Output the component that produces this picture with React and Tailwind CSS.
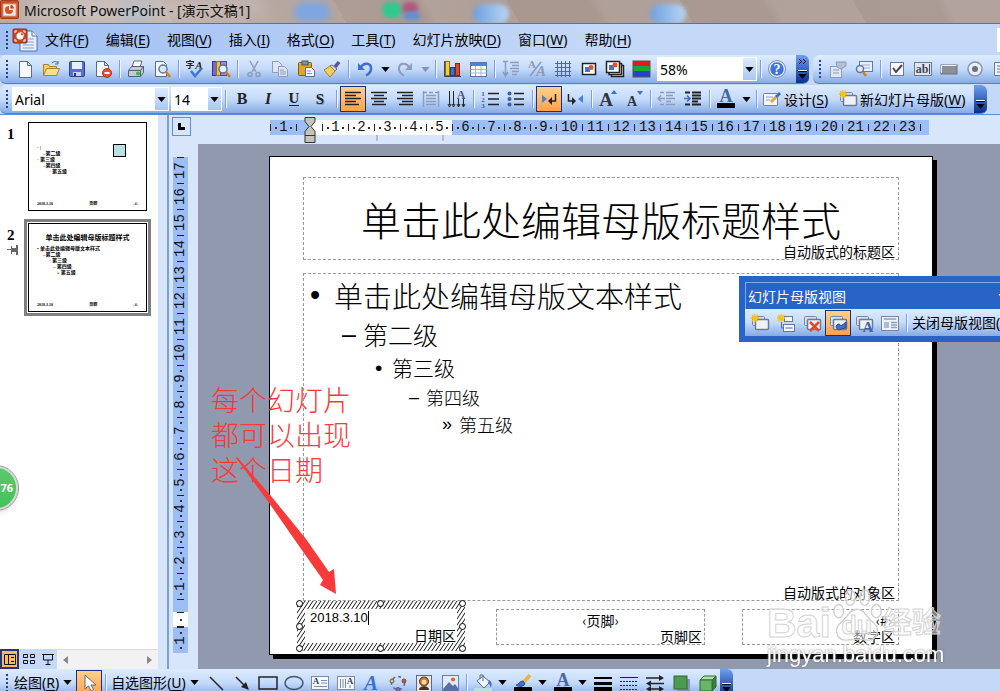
import clsx from 'clsx';

const MENUS = [
  ['文件', 'F'],
  ['编辑', 'E'],
  ['视图', 'V'],
  ['插入', 'I'],
  ['格式', 'O'],
  ['工具', 'T'],
  ['幻灯片放映', 'D'],
  ['窗口', 'W'],
  ['帮助', 'H'],
];

// '|' is a separator, a trailing '*' marks a pressed button, 'v' is a drop-down caret.
const STANDARD = ['new', 'open', 'save', 'permission', '|', 'print', 'preview', '|', 'spelling', 'research', '|', 'cut', 'copy', 'paste', 'painter', '|', 'undo', 'v', 'redo', 'v-off', '|', 'chart', 'table', '|', 'expand', 'showformat', 'grid', 'slide', 'slides', 'colors'];
const CONTROLS = ['properties', 'code', '|', 'checkbox', 'textbox', 'button', 'radio', 'listbox'];
const FORMAT = ['bold', 'italic', 'underline', 'shadowtext', '|', 'left*', 'center', 'right', 'distribute', 'direction', '|', 'numbers', 'bullets', '|', 'ltr*', 'rtl', '|', 'grow', 'shrink', '|', 'outdent', 'indent', '|', 'fontcolor', 'v', '|'];
const DRAWING = ['line', 'arrow', 'rect', 'oval', 'hbox', 'vbox', 'wordart', 'diagram', 'clipart', 'picture', '|', 'fill', 'v', 'brush', 'v', 'fontcolor', 'v', 'weight', 'dash', 'arrows', 'shadow', 'cube'];
const MASTER = ['newmaster', 'newtitle', 'delmaster', 'preserve*', 'rename', 'layout', '|'];

const TITLES = {
  new: '新建', open: '打开', save: '保存', permission: '权限', print: '打印', preview: '打印预览', spelling: '拼写检查', research: '信息检索',
  cut: '剪切', copy: '复制', paste: '粘贴', painter: '格式刷', undo: '撤消', redo: '恢复', chart: '插入图表', table: '插入表格',
  expand: '全部展开', showformat: '显示格式', grid: '网格', slide: '幻灯片', slides: '幻灯片组', colors: '颜色', properties: '属性', code: '查看代码',
  checkbox: '复选框', textbox: '文字框', button: '命令按钮', radio: '选项按钮', listbox: '列表框', bold: '加粗', italic: '倾斜', underline: '下划线',
  shadowtext: '阴影', left: '左对齐', center: '居中', right: '右对齐', distribute: '分散对齐', direction: '更改文字方向', numbers: '编号', bullets: '项目符号',
  ltr: '从左向右', rtl: '从右向左', grow: '增大字号', shrink: '减小字号', outdent: '减少缩进', indent: '增加缩进', fontcolor: '字体颜色',
  line: '直线', arrow: '箭头', rect: '矩形', oval: '椭圆', hbox: '文本框', vbox: '竖排文本框', wordart: '艺术字', diagram: '图示', clipart: '剪贴画',
  picture: '图片', fill: '填充颜色', brush: '线条颜色', weight: '线型', dash: '虚线线型', arrows: '箭头样式', shadow: '阴影样式', cube: '三维效果样式',
  newmaster: '插入新幻灯片母版', newtitle: '插入新标题母版', delmaster: '删除母版', preserve: '保护母版', rename: '重命名母版', layout: '母版版式',
  help: '帮助', pointer: '选择对象', design: '设计',
};

const LEVELS = [
  { text: '单击此处编辑母版文本样式', bullet: '•', row: 'h-11 pl-1.5 text-[29px]', mark: 'w-6' },
  { text: '第二级', bullet: '–', row: 'h-[34px] pl-[38px] text-[25px]', mark: 'w-[21px]' },
  { text: '第三级', bullet: '•', row: 'h-8 pl-[71px] text-[21px]', mark: 'w-[17px]' },
  { text: '第四级', bullet: '–', row: 'h-[26px] pl-[105px] text-[18px]', mark: 'w-[17px]' },
  { text: '第五级', bullet: '»', row: 'h-7 pl-[138px] text-[18px]', mark: 'w-[17px]' },
];

const UI = "font-['Noto_Sans','Noto_Sans_CJK_SC',sans-serif]";
const BAR = 'bg-linear-to-b from-[#dcebff] via-[#c5dbfb] to-[#86abe4]';

export default function App() {
  return (
    <div className={clsx('flex h-screen flex-col overflow-hidden bg-[#c4d8f8] text-black', UI)}>
      <TitleBar />
      <MenuBar />
      <div className="flex h-[29px] shrink-0">
        <Strip>
          <Grip />
          <Tools items={STANDARD} />
          <Picker label="显示比例" value="58%" width="w-[100px] ml-[3px]" />
          <Separator />
          <Tool name="help" />
          <Overflow more />
        </Strip>
        <Strip grow>
          <Grip />
          <Tools items={CONTROLS} />
        </Strip>
      </div>
      <div className="mt-px flex h-[29px] shrink-0">
        <Strip>
          <Grip />
          <Picker label="字体" value="Arial" width="w-[157px]" />
          <Picker label="字号" value="14" width="w-[51px] ml-0.5" />
          <Separator />
          <Tools items={FORMAT} />
          <TextTool icon="design" label="设计" accel="S" />
          <TextTool icon="newmaster" label="新幻灯片母版" accel="W" />
          <Overflow />
        </Strip>
      </div>
      <main className="relative flex min-h-0 flex-1 border-t border-[#5a8ad8]">
        <SlidePane />
        <Editor />
        <FloatingToolbar />
        <Annotation />
        <Watermark />
        <span className="absolute top-[351px] -left-7 flex h-11 w-[46px] items-center justify-end rounded-full border-2 border-[#d8d8d8] bg-linear-to-b from-[#5cc96c] to-[#3fc25c] pr-[3px] text-[11px] font-bold text-white shadow-md outline outline-[#999]">
          76
        </span>
      </main>
      <DrawingBar />
    </div>
  );
}

function TitleBar() {
  return (
    <header className="relative flex h-6 shrink-0 items-start gap-[5px] overflow-hidden border-b border-[#6c7078] bg-linear-to-r from-[#b9aaa4] via-[#a8978f] to-[#ab9b96]">
      <div className="absolute inset-0 bg-[repeating-linear-gradient(60deg,transparent_0_70px,rgba(255,255,255,0.08)_80px_150px)]" />
      <span className="absolute top-0.5 left-[118px] h-5 w-9 rounded-full bg-[#8fb0c8]/50 blur-xs" />
      <span className="absolute top-0.5 left-[294px] h-5 w-9 rounded-full bg-[#7ea6e0] blur-[3px]" />
      <span className="absolute top-0.5 left-[382px] h-4 w-5 rounded-full bg-[#2fc98e] blur-[2px]" />
      <span className="absolute top-0.5 left-[402px] h-3 w-4 rounded-full bg-[#b0567c] blur-[2px]" />
      <span className="absolute top-3 left-[404px] h-2 w-4 rounded-full bg-[#5c8fd8] blur-[2px]" />
      <span className="absolute top-1 left-[473px] h-5 w-9 rounded-full bg-linear-to-r from-[#6f9fe0] to-[#b8d6f2] blur-[2px]" />
      <span className="absolute top-1 left-[650px] h-5 w-9 rounded-full bg-linear-to-r from-[#6f9fe0] to-[#b8d6f2] blur-[2px]" />
      <span className="absolute top-0 left-6 h-5 w-[236px] rounded-full bg-white/40 blur-md" />
      <svg viewBox="0 0 19 19" className="relative h-[19px] w-[19px] shrink-0">
        <rect x="0.5" y="0.5" width="18" height="18" rx="1" fill="#c8502e" stroke="#a43a1c" />
        <rect x="3" y="4" width="13" height="12" fill="#fbe9df" stroke="#e39a78" />
        <circle cx="9" cy="10" r="4" fill="#d0562f" />
        <path d="M9 10V6a4 4 0 0 1 4 4z" fill="#fbe9df" />
        <path d="M10.500 8.500V5a4 4 0 0 1 3.500 3.500z" fill="#b8421f" />
      </svg>
      <h1 className="relative text-[14px] leading-[21px] text-[#111]">Microsoft PowerPoint - [演示文稿1]</h1>
    </header>
  );
}

function MenuBar() {
  return (
    <nav className="flex h-[31px] shrink-0 items-center bg-linear-to-r from-[#a0bff4] to-[#c4d8f8] to-60%">
      <Grip />
      <svg viewBox="0 0 26 26" className="h-[26px] w-[26px] shrink-0">
        <path d="M8 4h12l5 5v15H8z" fill="#e8f1fd" stroke="#54709e" />
        <path d="M20 4v5h5" fill="#fff" stroke="#54709e" />
        <path d="M16 12h6M14 15h8M11 18h11M11 21h11" stroke="#7fa3dc" />
        <rect x="1" y="2" width="14" height="14" rx="1" fill="#c64a28" stroke="#8e2c12" />
        <path d="M3 6V4h2M11 4h2v2M13 12v2h-2M5 14H3v-2" stroke="#fff" fill="none" />
        <circle cx="8" cy="9" r="3.500" fill="#fff" />
        <path d="M8.500 8.500V5a4 4 0 0 1 3.500 3.500z" fill="#d8663f" stroke="#fff" strokeWidth="0.500" />
      </svg>
      <ul className="flex pl-[7px]">
        {MENUS.map(([label, accel]) => (
          <li key={accel} className="pr-[17px] pb-0.5">
            <button type="button" className="text-[14px] leading-5 whitespace-nowrap">
              <Accel label={label} accel={accel} />
            </button>
          </li>
        ))}
      </ul>
      <div className="ml-auto h-6 w-[3px] bg-white" />
    </nav>
  );
}

function Accel({ label, accel }) {
  return (
    <>
      {label}(<u className="underline-offset-2">{accel}</u>)
    </>
  );
}

function Strip({ grow, children }) {
  return <div className={clsx('flex h-full shrink-0 items-center overflow-hidden rounded-md border-b border-[#5681c9]', BAR, grow && 'ml-1 min-w-0 flex-1 !shrink rounded-r-none')}>{children}</div>;
}

function Grip() {
  return (
    <div className="ml-1.5 flex w-1.5 shrink-0 flex-col gap-0.5">
      {[0, 1, 2, 3, 4].map((n) => (
        <span key={n} className="h-0.5 w-0.5 bg-[#27417f]" />
      ))}
    </div>
  );
}

function Separator() {
  return <div className="mx-[3px] h-[18px] w-px shrink-0 bg-[#7f9fd6] shadow-[1px_0_0_#f0f6ff]" />;
}

function Caret({ off }) {
  return (
    <svg viewBox="0 0 10 6" className="h-[5px] w-[9px] shrink-0">
      <path d="M0 0h10L5 6z" fill={off ? '#8a94a8' : '#000'} />
    </svg>
  );
}

function Tool({ name, pressed, small }) {
  return (
    <button
      type="button"
      aria-label={TITLES[name]}
      className={clsx('flex w-[26px] shrink-0 items-center justify-center', small ? 'h-[25px]' : 'h-[26px]', pressed && 'border border-[#1c2f7c] bg-linear-to-b from-[#ffd08a] to-[#ffa24e]')}
    >
      <Icon name={name} />
    </button>
  );
}

function Tools({ items }) {
  return items.map((item, i) => {
    if (item === '|') return <Separator key={i} />;
    if (item[0] === 'v' && item !== 'vbox') {
      return (
        <button key={i} type="button" aria-label="更多" className="flex h-6 w-3.5 shrink-0 items-center justify-center">
          <Caret off={item === 'v-off'} />
        </button>
      );
    }
    return <Tool key={i} name={item.replace('*', '')} pressed={item.endsWith('*')} />;
  });
}

function Picker({ label, value, width }) {
  return (
    <label className={clsx('relative flex h-6 shrink-0 items-center bg-white', width)}>
      <select aria-label={label} defaultValue={value} className="h-full w-full appearance-none bg-white pl-[3px] text-[14px] outline-none">
        <option>{value}</option>
      </select>
      <span className="pointer-events-none absolute inset-y-0 right-0 flex w-[15px] items-center justify-center border border-white bg-linear-to-b from-[#dcebff] to-[#a9c6f3]">
        <Caret />
      </span>
    </label>
  );
}

function TextTool({ icon, label, accel }) {
  return (
    <button type="button" className="flex h-[26px] shrink-0 items-center gap-0.5 pr-2 pl-0.5 text-[14px] whitespace-nowrap">
      <Icon name={icon} />
      <span>
        <Accel label={label} accel={accel} />
      </span>
    </button>
  );
}

function Overflow({ more }) {
  return (
    <button type="button" aria-label="工具栏选项" className={clsx('flex h-full w-[13px] shrink-0 flex-col items-center justify-end bg-linear-to-b from-[#6f9ff0] to-[#0b2f8c] pb-1', more && 'ml-1.5')}>
      {more ? (
        <svg viewBox="0 0 9 5" className="mt-1 mb-auto h-[5px] w-[9px] shrink-0" fill="none" stroke="#000">
          <path d="m1 0 2.500 2.500L1 5M5 0l2.500 2.500L5 5" />
        </svg>
      ) : null}
      <span className="mb-0.5 h-0.5 w-[9px] shrink-0 border-t border-white bg-black" />
      <Caret />
    </button>
  );
}

function SlidePane() {
  return (
    <aside className="flex w-[169px] shrink-0 border-r-2 border-[#7ba0de] bg-[#d6e5fb]">
      <div className="flex min-w-0 flex-1 flex-col bg-white">
        <ol className="flex flex-1 flex-col pr-[11px] font-['Liberation_Serif','Noto_Sans_CJK_SC',serif]">
          <li className="flex pt-[7px]">
            <span className="w-7 pt-0.5 pl-[7px] text-[15px] leading-5 font-bold">1</span>
            <Thumb>
              <span className="absolute top-[21px] right-5 h-[13px] w-[13px] border border-black bg-[#b9e1e3]" />
              <ThumbLines className="top-[22px]" lines={['· |', '–第二级', '· 第三级', '–第四级', '· 第五级']} indents={['pl-0', 'pl-1.5', 'pl-0', 'pl-1.5', 'pl-3']} />
            </Thumb>
          </li>
          <li className="flex pt-2">
            <div className="flex w-6 flex-col pt-1.5 pl-[7px]">
              <span className="text-[15px] leading-5 font-bold">2</span>
              <svg viewBox="0 0 12 10" className="h-2.5 w-3" fill="#666" aria-hidden="true">
                <path d="M0 4h4V1h1v2h4V0h2v10H9V7H5v2H4V5H0z" />
              </svg>
            </div>
            <div className="-mr-1 flex flex-1 border-3 border-[#808080] p-px">
              <Thumb>
                <p className="pt-2 text-center text-[7px] leading-3 font-bold whitespace-nowrap">单击此处编辑母版标题样式</p>
                <ThumbLines className="top-[22px]" lines={['• 单击此处编辑母版文本样式', '–第二级', '· 第三级', '– 第四级', '» 第五级']} indents={['pl-0', 'pl-1.5', 'pl-3', 'pl-4', 'pl-5']} />
              </Thumb>
            </div>
          </li>
        </ol>
        <div className="flex h-5 items-stretch">
          <ViewButton label="普通视图" pressed>
            <path d="M1.500 2.500h11v10h-11zM5.500 2.500v10M8 5.500h3M8 9.500h3" />
          </ViewButton>
          <ViewButton label="幻灯片浏览视图">
            <path d="M1.500 2.500h4v3h-4zM8.500 2.500h4v3h-4zM1.500 8.500h4v3h-4zM8.500 8.500h4v3h-4z" />
          </ViewButton>
          <ViewButton label="幻灯片放映">
            <path d="M1 2.500h12M2.500 3v5h9V3M7 8v4M4.500 12.500h5" />
          </ViewButton>
          <div className="flex flex-1 items-center justify-between border-t border-[#ddd] bg-[#f2f2f2] px-1.5 text-[#888]">
            <svg viewBox="0 0 5 8" className="h-2 w-[5px]" fill="currentColor">
              <path d="M5 0v8L0 4z" />
            </svg>
            <svg viewBox="0 0 5 8" className="h-2 w-[5px]" fill="currentColor">
              <path d="M0 0v8l5-4z" />
            </svg>
          </div>
        </div>
      </div>
      <div className="w-[9px] bg-[#d6e5fb]" />
    </aside>
  );
}

function Thumb({ children }) {
  return (
    <div className="relative h-[89px] flex-1 overflow-hidden border border-black bg-white">
      {children}
      <div className="absolute inset-x-2 bottom-1 flex items-end justify-between text-[4px] leading-1 font-bold">
        <span>2018.3.10</span>
        <span>页脚</span>
        <span>‹#›</span>
      </div>
    </div>
  );
}

function ThumbLines({ className, lines, indents }) {
  return (
    <ul className={clsx('absolute left-2', className)}>
      {lines.map((line, i) => (
        <li key={line} className={clsx('text-[5px] leading-[6px] font-bold whitespace-nowrap', indents[i])}>
          {line}
        </li>
      ))}
    </ul>
  );
}

function ViewButton({ label, pressed, children }) {
  return (
    <button type="button" aria-label={label} className={clsx('flex w-[19px] items-center justify-center', pressed ? 'border-2 border-[#26357c] bg-[#ffb868]' : 'bg-[#c4daf8]')}>
      <svg viewBox="0 0 14 14" className="h-3.5 w-3.5 shrink-0" fill="none" stroke="#111">
        {children}
      </svg>
    </button>
  );
}

// Ruler cells are one centimetre each, centred on their number.
function HCell({ n }) {
  return (
    <span className="flex w-[26px] shrink-0 items-center">
      <span className="h-[7px] w-px bg-[#222]" />
      {n < 10 ? <span className="ml-1 h-0.5 w-0.5 bg-[#333]" /> : null}
      <span className="flex-1 text-center">{n}</span>
      {n < 10 ? <span className="mr-1 h-0.5 w-0.5 bg-[#333]" /> : null}
    </span>
  );
}

function VCell({ n }) {
  return (
    <span className="flex h-[26px] shrink-0 flex-col items-center">
      <span className="h-px w-[7px] shrink-0 bg-[#222]" />
      {n < 10 ? <span className="mt-1 h-0.5 w-0.5 shrink-0 bg-[#333]" /> : null}
      <span className="flex min-h-0 flex-1 items-center justify-center">
        <span className="-rotate-90">{n}</span>
      </span>
      {n < 10 ? <span className="mb-1 h-0.5 w-0.5 shrink-0 bg-[#333]" /> : null}
    </span>
  );
}

const range = (from, to) => Array.from({ length: to - from + 1 }, (_, i) => from + i);
const RULER = "font-['Liberation_Mono',monospace] text-[14px] leading-[15px] text-[#111]";

function Editor() {
  return (
    <section className="flex min-w-0 flex-1 flex-col bg-[#d8e6fb]">
      <div className="flex h-[29px] shrink-0 items-start">
        <button type="button" aria-label="制表符" className="mt-0.5 ml-[3px] flex h-[19px] w-[19px] shrink-0 items-center justify-center border border-[#5f8fdc]">
          <span className="h-[7px] w-[7px] border-b-3 border-l-3 border-black" />
        </button>
        <div className={clsx('relative mt-[5px] ml-[79px] flex h-[15px]', RULER)}>
          <div className="flex w-[39px] overflow-hidden bg-[#9dbdf6]">
            <HCell n={1} />
            <span className="h-[7px] w-px self-center bg-[#222]" />
          </div>
          <div className="flex bg-white pl-[13px]">
            {range(1, 5).map((n) => (
              <HCell key={n} n={n} />
            ))}
          </div>
          <div className="flex items-center bg-[#9dbdf6] pr-2">
            {range(6, 23).map((n) => (
              <HCell key={n} n={n} />
            ))}
            <span className="h-[7px] w-px bg-[#222]" />
          </div>
          <svg viewBox="0 0 12 28" className="absolute -top-[4px] left-[34px] h-7 w-3" fill="#c4c4bc" stroke="#333">
            <path d="M1 1.500h10v4l-4 5 4 5v11H1v-11l4-5-4-5zM1 19.500h10" />
          </svg>
          <span className="absolute top-[15px] left-[106px] h-1.5 w-0.5 bg-[#bbb]" />
          <span className="absolute top-[15px] left-[172px] h-1.5 w-0.5 bg-[#bbb]" />
        </div>
      </div>
      <div className="flex min-h-0 flex-1">
        <div className={clsx('mt-[13px] mr-2.5 ml-1 flex h-[496px] w-[15px] shrink-0 flex-col', RULER)}>
          <div className="flex h-[442px] shrink-0 flex-col justify-end overflow-hidden bg-[#9dbdf6]">
            {range(1, 17)
              .reverse()
              .map((n) => (
                <VCell key={n} n={n} />
              ))}
          </div>
          <div className="flex h-[13px] shrink-0 flex-col items-center bg-[#9dbdf6]">
            <span className="h-px w-[7px] bg-[#222]" />
          </div>
          <div className="flex h-[15px] shrink-0 flex-col items-center justify-between bg-white">
            <span className="h-px w-[7px] bg-[#222]" />
            <span className="h-0.5 w-0.5 bg-[#333]" />
            <span className="h-px w-[7px] bg-[#222]" />
          </div>
          <div className="flex shrink-0 flex-col bg-[#9dbdf6]">
            <VCell n={1} />
          </div>
        </div>
        <div className="flex min-w-0 flex-1 bg-[#9099ae] pt-3 pr-[67px] pb-3.5 pl-[71px]">
          <Slide />
        </div>
      </div>
    </section>
  );
}

const AREA = "font-['Noto_Sans_CJK_SC',sans-serif] text-[14px] leading-4";
const DASHED = 'border border-dashed border-[#999]';
const CJK = "font-['Noto_Sans_CJK_SC',sans-serif]";

function Slide() {
  return (
    <article className="flex min-w-0 flex-1 flex-col border border-black bg-white px-[33px] pt-5 pb-[9px] shadow-[4px_4px_0_#000]">
      <div className={clsx('flex h-[83px] flex-col justify-between', DASHED)}>
        <h2 className={clsx('pt-[18px] text-center text-[40px] leading-[46px] font-light whitespace-nowrap', CJK)}>单击此处编辑母版标题样式</h2>
        <p className={clsx('pr-[3px] text-right', AREA)}>自动版式的标题区</p>
      </div>
      <div className={clsx('mt-[13px] flex flex-1 flex-col justify-between', DASHED)}>
        <ul className={clsx('font-light', CJK)}>
          {LEVELS.map((level) => (
            <li key={level.text} className={clsx('flex items-center whitespace-nowrap', level.row)}>
              <span className={clsx('shrink-0 font-normal', "font-['Liberation_Sans',sans-serif]", level.mark)}>{level.bullet}</span>
              {level.text}
            </li>
          ))}
        </ul>
        <p className={clsx('pr-[3px] text-right', AREA)}>自动版式的对象区</p>
      </div>
      <div className="flex h-11 items-start justify-between">
        <DateBox />
        <div className={clsx('mt-2 mr-1.5 h-9 w-[209px]', DASHED)}>
          <p className={clsx('pt-0.5 text-center', AREA)}>‹页脚›</p>
          <p className={clsx('pr-0.5 text-right', AREA)}>页脚区</p>
        </div>
        <div className={clsx('mt-2 h-9 w-[157px]', DASHED)}>
          <p className={clsx('pt-0.5 pr-1.5 text-right', AREA)}>‹#›</p>
          <p className={clsx('pr-[3px] text-right', AREA)}>数字区</p>
        </div>
      </div>
    </article>
  );
}

const HANDLES = ['-top-px -left-px', '-top-px left-20', '-top-px -right-px', 'top-[22px] -left-px', 'top-[22px] -right-px', '-bottom-px -left-px', '-bottom-px left-20', '-bottom-px -right-px'];

function DateBox() {
  return (
    <div className="relative -ml-1.5 h-[50px] w-[168px] shrink-0 p-2">
      <svg className="absolute inset-0 h-full w-full" aria-hidden="true">
        <defs>
          <pattern id="hatch" width="4" height="6" patternUnits="userSpaceOnUse">
            <path d="M-1 7.500 5-1.500M-5 7.500 1-1.500M3 7.500 9-1.500" stroke="#111" strokeWidth="1" />
          </pattern>
        </defs>
        <rect width="100%" height="100%" fill="url(#hatch)" />
      </svg>
      <div className="relative flex h-full flex-col bg-white">
        <input aria-label="日期" defaultValue="2018.3.10" className="h-[18px] w-full pl-[5px] font-['Liberation_Sans',sans-serif] text-[13px] outline-none" />
        <p className={clsx('pr-px text-right', AREA)}>日期区</p>
        <span className="absolute top-0.5 left-[63px] h-3.5 w-px bg-black" />
      </div>
      {HANDLES.map((spot) => (
        <span key={spot} className={clsx('absolute h-[7px] w-[7px] rounded-full border border-black bg-white', spot)} />
      ))}
    </div>
  );
}

function FloatingToolbar() {
  return (
    <div className="absolute top-[161px] left-[739px] w-[360px] bg-[#2864c8] p-1.5">
      <div className="flex h-[27px] items-center border-t border-l border-[#7fa8ee] pl-0.5 text-[14px] text-white">
        <span className="flex-1">幻灯片母版视图</span>
        <svg viewBox="0 0 10 6" className="mr-[86px] h-[5px] w-[9px]" fill="#fff">
          <path d="M0 0h10L5 6z" />
        </svg>
      </div>
      <div className={clsx('flex h-[27px] items-center pl-0.5', BAR)}>
        <Tools items={MASTER} />
        <button type="button" className="pl-0.5 text-[14px] whitespace-nowrap">
          <Accel label="关闭母版视图" accel="C" />
        </button>
      </div>
    </div>
  );
}

function Annotation() {
  return (
    <div className="pointer-events-none absolute top-[267px] left-[211px]">
      <p className={clsx('text-[28px] leading-[35px] font-light text-[#f83a3a]', CJK)}>
        每个幻灯片
        <br />
        都可以出现
        <br />
        这个日期
      </p>
      <svg viewBox="0 0 110 140" className="absolute top-[75px] left-6 h-[140px] w-[110px]" fill="#f83a3a">
        <path d="M1 1 2 0 36 39 71 82 94 115 99 112 101 137 85 128 88 123 64 89 32 43z" />
      </svg>
    </div>
  );
}

function Watermark() {
  return (
    <div className="pointer-events-none absolute top-[468px] left-[767px] font-['Liberation_Sans','Noto_Sans_CJK_SC',sans-serif] font-bold text-white/50">
      <div className="flex h-[60px] items-end text-[41px] leading-10 [-webkit-text-stroke:1px_#d4d4d4]">
        <span>Bai</span>
        <span className="relative flex h-14 w-[52px] items-end justify-center text-[25px] leading-9">
          <svg viewBox="0 0 54 56" className="absolute inset-0 h-14 w-[52px]" fill="#fff" fillOpacity="0.5" stroke="#d0d0d0" strokeWidth="1.500">
            <ellipse cx="8" cy="24" rx="5" ry="7" />
            <ellipse cx="20" cy="10" rx="5" ry="8" />
            <ellipse cx="35" cy="10" rx="5" ry="8" />
            <ellipse cx="47" cy="24" rx="5" ry="7" />
            <path d="M27 22c8 0 10 9 17 14 8 7 4 19-7 18-7-1-12-1-20 0-11 1-15-11-7-18 7-5 9-14 17-14z" />
          </svg>
          <span className="relative">du</span>
        </span>
        <span className="text-[29px]">经验</span>
      </div>
      <p className="text-[22px] leading-6 font-normal text-white drop-shadow-[0_0_1px_#777]">jingyan.baidu.com</p>
    </div>
  );
}

function DrawingBar() {
  return (
    <footer className="flex h-[22px] shrink-0 items-start overflow-hidden">
      <div className={clsx('flex h-[27px] shrink-0 items-center overflow-hidden rounded-tr-md', BAR)}>
        <Grip />
        <button type="button" className="flex items-center gap-1 pr-1 pl-0.5 text-[14px] whitespace-nowrap">
          <span>
            <Accel label="绘图" accel="R" />
          </span>
          <Caret />
        </button>
        <Tool name="pointer" pressed small />
        <Separator />
        <button type="button" className="flex items-center gap-1 pr-1 pl-0.5 text-[14px] whitespace-nowrap">
          <span>
            <Accel label="自选图形" accel="U" />
          </span>
          <Caret />
        </button>
        <Tools items={DRAWING} />
        <Overflow />
      </div>
    </footer>
  );
}

const PAPER = { fill: '#f4f8ff', stroke: '#5b6c8c' };
const DIM = '#8d9cba';

function Icon({ name }) {
  return (
    <svg viewBox="0 0 20 20" className="h-5 w-5 shrink-0" fill="none" stroke="#222" aria-hidden="true">
      {ICONS[name]}
    </svg>
  );
}

const TextGlyph = ({ x = 10, y = 15, size = 15, color = '#222', children, ...rest }) => (
  <text x={x} y={y} fontSize={size} fill={color} stroke="none" textAnchor="middle" fontWeight="bold" fontFamily="Liberation Serif, serif" {...rest}>
    {children}
  </text>
);

const cards = (
  <>
    <rect x="2.500" y="3.500" width="12" height="9" rx="1" fill="#d5ddea" stroke="#7b89a3" />
    <rect x="5.500" y="6.500" width="13" height="10" rx="1" fill="#eef2f8" stroke="#6b7a95" strokeWidth="1.500" />
  </>
);
const star = <path d="M5 1v8M1 5h8M2 2l6 6M8 2 2 8" stroke="#f6c21c" strokeWidth="1.500" />;

const ICONS = {
  new: <path d="M4.500 2.500h8l4 4v12h-12zM12.500 2.500v4h4" {...PAPER} />,
  open: (
    <>
      <path d="M2.500 16.500v-11h5l1 2h7v3" fill="#f6cf62" stroke="#a9802a" />
      <path d="m2.500 16.500 3-7h13l-3 7z" fill="#ffdf83" stroke="#a9802a" />
      <path d="M11 4c2-2 4-2 6 0m0-2v3h-3" stroke="#44669a" />
    </>
  ),
  save: (
    <>
      <rect x="2.500" y="2.500" width="15" height="15" rx="1" fill="#5b6fd0" stroke="#33408f" />
      <path d="M5 3h10v7H5z" fill="#e8efff" stroke="none" />
      <path d="M6 13h8v4H6z" fill="#c9d2ee" stroke="none" />
      <path d="M7 14h2v3H7z" fill="#26337e" stroke="none" />
    </>
  ),
  permission: (
    <>
      <path d="M3.500 2.500h8l4 4v11h-12zM11.500 2.500v4h4" {...PAPER} />
      <circle cx="14" cy="14" r="4.500" fill="#e2502d" stroke="#b5331a" />
      <path d="M11.500 14h5" stroke="#fff" strokeWidth="2" />
    </>
  ),
  print: (
    <>
      <path d="m6 8 2-6h8l-2 6z" fill="#fff" stroke="#667" />
      <path d="m2.500 11.500 3-4h12v6l-3 4h-12z" fill="#c3cad8" stroke="#555f75" />
      <path d="M2.500 11.500h12v6M14.500 11.500l3-4" stroke="#555f75" />
      <circle cx="12" cy="14.500" r="2" fill="#2fc22f" stroke="none" />
    </>
  ),
  preview: (
    <>
      <path d="M3.500 2.500h8l3 3v12h-11z" {...PAPER} />
      <circle cx="11" cy="10" r="4" fill="#d5e7fb" stroke="#66788f" strokeWidth="1.500" />
      <path d="m14 13 4 5" stroke="#c98224" strokeWidth="2.500" />
    </>
  ),
  spelling: (
    <>
      <TextGlyph x={5} y={9} size={9} fontFamily="Noto Sans CJK SC, sans-serif">
        字
      </TextGlyph>
      <TextGlyph x={14} y={10} size={11} fontStyle="italic">
        A
      </TextGlyph>
      <path d="m6 12 4 5 7-8" stroke="#3d78d6" strokeWidth="2.500" />
    </>
  ),
  research: (
    <>
      <rect x="1.500" y="2.500" width="4" height="14" fill="#7a6ac8" stroke="#3f3489" />
      <rect x="5.500" y="2.500" width="4" height="14" fill="#efc04a" stroke="#94701d" />
      <rect x="9.500" y="2.500" width="6" height="14" fill="#9c8ad8" stroke="#5247a0" />
      <circle cx="12" cy="10" r="4" fill="#e4f1ff" stroke="#60708a" strokeWidth="1.500" />
      <path d="m15 13 4 5" stroke="#c98224" strokeWidth="2.500" />
    </>
  ),
  cut: (
    <g stroke={DIM} strokeWidth="1.500">
      <path d="m6 2 6 11M14 2 8 13" />
      <circle cx="6" cy="15.500" r="2" />
      <circle cx="14" cy="15.500" r="2" />
    </g>
  ),
  copy: (
    <g fill="#dce6f6" stroke={DIM}>
      <path d="M2.500 2.500h6l3 3v8h-9z" />
      <path d="M8.500 7.500h6l3 3v7h-9zM10 11h4M10 13h6M10 15h6" />
    </g>
  ),
  paste: (
    <>
      <rect x="2.500" y="3.500" width="13" height="13" rx="1" fill="#e0a52d" stroke="#805b13" />
      <rect x="6" y="2" width="6" height="4" fill="#8490a8" stroke="#485268" />
      <path d="M9.500 8.500h6l3 3v6h-9z" {...PAPER} />
      <path d="M11 12h4M11 14.500h5" stroke="#7c93c0" />
    </>
  ),
  painter: (
    <>
      <path d="m13 8 4-5" stroke="#5c4ba8" strokeWidth="3.500" />
      <path d="m10 6 5 4-2 2-5-5z" fill="#d7dbe8" stroke="#667" />
      <path d="M8 7 2 11l6 7 5-6z" fill="#f2d056" stroke="#a5832c" />
    </>
  ),
  undo: (
    <>
      <path d="M3 4v7h7z" fill="#3e6fd0" stroke="none" />
      <path d="M6 8c3-5 10-4 10 1.500 0 3.500-2 5.500-5 7" stroke="#3e6fd0" strokeWidth="2.500" />
    </>
  ),
  redo: (
    <>
      <path d="M17 4v7h-7z" fill={DIM} stroke="none" />
      <path d="M14 8C11 3 4 4 4 9.500c0 3.500 2 5.500 5 7" stroke={DIM} strokeWidth="2" />
    </>
  ),
  chart: (
    <>
      <path d="M2.500 2v15.500H19" stroke="#445" />
      <rect x="3.500" y="2.500" width="4" height="14" fill="#f4cf3c" stroke="#8a6d12" />
      <rect x="8.500" y="8.500" width="4" height="8" fill="#3f72d8" stroke="#1c3f86" />
      <rect x="13.500" y="4.500" width="4" height="12" fill="#dd4a24" stroke="#862710" />
    </>
  ),
  table: (
    <>
      <rect x="2.500" y="3.500" width="16" height="14" fill="#fff" stroke="#5a76ad" />
      <path d="M3 4h15v3H3z" fill="#4c82dc" stroke="none" />
      <path d="M2.500 10.500h16M2.500 14h16M7.500 7v10M13 7v10" stroke="#a4b6d6" />
    </>
  ),
  expand: <path d="M4.500 2v14M2 13l2.500 4L7 13M2 2.500h5M9 3.500h9M11 6.500h7M9 9.500h9M11 12.500h7M11 15.500h5" stroke={DIM} strokeWidth="1.500" />,
  showformat: (
    <>
      <TextGlyph x={5} y={9} size={11} color={DIM}>
        A
      </TextGlyph>
      <TextGlyph x={14} y={17} size={15} color={DIM} fontStyle="italic">
        A
      </TextGlyph>
      <path d="M3 17 14 3" stroke={DIM} strokeWidth="1.500" />
    </>
  ),
  grid: <path d="M4.500 2v16M8.500 2v16M12.500 2v16M16.500 2v16M2 4.500h16M2 8.500h16M2 12.500h16M2 16.500h16" stroke="#4d6799" />,
  slide: (
    <>
      <rect x="3.500" y="4.500" width="13" height="11" fill="#fff" stroke="#222" strokeWidth="1.500" />
      <rect x="6" y="8" width="5" height="5" fill="#3c73dc" stroke="none" />
      <circle cx="12" cy="8.500" r="2.500" fill="#e8502c" stroke="none" />
    </>
  ),
  slides: (
    <>
      <path d="M6.500 6.500h12v11h-12z" fill="#fff" strokeWidth="1.500" />
      <path d="M4 4.500h12.500v11H4z" fill="#fff" strokeWidth="1.500" />
      <path d="M1.500 2.500h13v11h-13z" fill="#fff" strokeWidth="1.500" />
      <rect x="4" y="6" width="5" height="5" fill="#3c73dc" stroke="none" />
      <circle cx="10" cy="6" r="2.500" fill="#e8502c" stroke="none" />
    </>
  ),
  colors: (
    <>
      <rect x="2" y="2" width="17" height="6" fill="#d81f1f" stroke="none" />
      <rect x="2" y="7" width="17" height="6" fill="#18a838" stroke="none" />
      <rect x="2" y="12" width="17" height="6" fill="#2346c8" stroke="none" />
      <rect x="2" y="2" width="17" height="16" stroke="#555" />
    </>
  ),
  help: (
    <>
      <circle cx="10" cy="10" r="7.500" fill="#3e74d8" stroke="#e6eefc" strokeWidth="1.500" />
      <circle cx="10" cy="10" r="8.500" stroke="#7b8eb8" />
      <TextGlyph y={15} size={14} color="#fff">
        ?
      </TextGlyph>
    </>
  ),
  properties: (
    <g stroke={DIM}>
      <rect x="2.500" y="7.500" width="11" height="11" fill="#dfe7f4" />
      <path d="M5 11h6M5 14h6M8 3h10v4l-5 3-4-2z" fill="#b4bfd3" />
    </g>
  ),
  code: (
    <>
      <rect x="5.500" y="2.500" width="13" height="10" fill="#e9f0fb" stroke="#65779a" />
      <path d="M8 6h8M8 9h8" stroke="#9cabc8" />
      <circle cx="6" cy="10" r="3.500" fill="#dcebfc" stroke="#65779a" strokeWidth="1.500" />
      <path d="m9 13 3 4" stroke="#c98224" strokeWidth="2.500" />
    </>
  ),
  checkbox: (
    <>
      <rect x="3.500" y="3.500" width="13" height="13" fill="#fafafa" stroke="#70798c" />
      <path d="m6 9 3 4 6-7" strokeWidth="2" stroke="#445" />
    </>
  ),
  textbox: (
    <>
      <rect x="1.500" y="3.500" width="17" height="13" fill="#dfe6f2" stroke="#70798c" />
      <TextGlyph x={9} y={14} size={12} color="#445">
        ab
      </TextGlyph>
      <path d="M16.500 5v10" stroke="#445" />
    </>
  ),
  button: (
    <>
      <rect x="2" y="6" width="16" height="9" fill="#8b8f98" stroke="#6a6e78" />
      <path d="M2.500 14V6.500h15" stroke="#f0f2f6" />
    </>
  ),
  radio: (
    <>
      <circle cx="10" cy="10" r="7" fill="#e9edf5" stroke="#8a94a8" strokeWidth="1.500" />
      <circle cx="10" cy="10" r="3" fill="#667088" stroke="none" />
    </>
  ),
  listbox: <path d="M3.500 3.500h13v13h-13zM6 7h8M6 10h8M6 13h8" fill="#eef2f9" stroke="#70798c" />,
  bold: <TextGlyph size={16}>B</TextGlyph>,
  italic: (
    <TextGlyph size={16} fontStyle="italic">
      I
    </TextGlyph>
  ),
  underline: (
    <>
      <TextGlyph y={14} size={15}>
        U
      </TextGlyph>
      <path d="M5 16.500h10" />
    </>
  ),
  shadowtext: (
    <>
      <TextGlyph x={11} y={16} size={15} color="#8fa3c4">
        S
      </TextGlyph>
      <TextGlyph size={15}>S</TextGlyph>
    </>
  ),
  left: <path d="M2 3.500h16M2 6.500h11M2 9.500h16M2 12.500h11M2 15.500h14" strokeWidth="1.500" />,
  center: <path d="M2 3.500h16M5 6.500h10M2 9.500h16M5 12.500h10M3 15.500h14" strokeWidth="1.500" />,
  right: <path d="M2 3.500h16M7 6.500h11M2 9.500h16M7 12.500h11M4 15.500h14" strokeWidth="1.500" />,
  distribute: <path d="M2.500 2v16M17.500 2v16M3 3.500h3M14 3.500h3M5 6.500h10M5 9.500h10M5 12.500h10M5 15.500h10M8 3.500h4" stroke={DIM} strokeWidth="1.500" />,
  direction: (
    <>
      <path d="M2.500 2v14M6.500 2v14M11.500 10v7M16.500 10v7M1 15l1.500 3L4 15M5 15l1.500 3L8 15M10 15l1.500 3 1.500-3M15 15l1.500 3 1.500-3" />
      <TextGlyph x={14} y={10} size={12} color="#44588c">
        A
      </TextGlyph>
    </>
  ),
  numbers: (
    <>
      <path d="M8 4.500h11M8 10h11M8 15.500h11" strokeWidth="1.500" />
      <TextGlyph x={3} y={7} size={7} color="#3c5f9e">
        1
      </TextGlyph>
      <TextGlyph x={3} y={13} size={7} color="#3c5f9e">
        2
      </TextGlyph>
      <TextGlyph x={3} y={19} size={7} color="#3c5f9e">
        3
      </TextGlyph>
    </>
  ),
  bullets: (
    <>
      <path d="M8 4.500h10M8 10h10M8 15.500h10" strokeWidth="1.500" />
      <g fill="#3c5f9e" stroke="none">
        <circle cx="3.500" cy="4.500" r="2" />
        <circle cx="3.500" cy="10" r="2" />
        <circle cx="3.500" cy="15.500" r="2" />
      </g>
    </>
  ),
  ltr: (
    <>
      <path d="m3 6 5 4-5 4z" fill="#4a7fd8" stroke="none" />
      <path d="M16.500 5v7H12" strokeWidth="1.500" />
      <path d="m9 12 4-4v8z" fill="#222" stroke="none" />
    </>
  ),
  rtl: (
    <>
      <path d="m18 6-5 4 5 4z" fill="#4a7fd8" stroke="none" />
      <path d="M3.500 5v7H8" strokeWidth="1.500" />
      <path d="M11 12 7 8v8z" fill="#222" stroke="none" />
    </>
  ),
  grow: (
    <>
      <TextGlyph x={8} y={17} size={19} color="#334">
        A
      </TextGlyph>
      <path d="m13 5 3-4 3 4z" fill="#3c6fc8" stroke="none" />
    </>
  ),
  shrink: (
    <>
      <TextGlyph x={8} y={17} size={14} color="#334">
        A
      </TextGlyph>
      <path d="m13 2 3 4 3-4z" fill="#3c6fc8" stroke="none" />
    </>
  ),
  outdent: <path d="M3 3.500h4M9 3.500h9M9 6.500h7M9 9.500h9M9 12.500h5M3 15.500h4M9 15.500h9M8 9.500H2m2-3-3 3 3 3" stroke={DIM} strokeWidth="1.500" />,
  indent: (
    <>
      <path d="M2 3.500h5M9 3.500h9M9 6.500h9M9 9.500h9M9 12.500h6M2 15.500h5M9 15.500h9" strokeWidth="2" />
      <path d="M1 9.500h5m-2-3 3 3-3 3" stroke="#3c6fc8" strokeWidth="1.500" />
    </>
  ),
  fontcolor: (
    <>
      <TextGlyph y={13} size={18} color="#4467a8">
        A
      </TextGlyph>
      <rect x="1" y="14" width="18" height="5" fill="#000" stroke="none" />
    </>
  ),
  design: (
    <>
      <rect x="1.500" y="4.500" width="14" height="12" rx="1" fill="#f3f7fd" stroke="#6f7f9c" />
      <path d="M4 8h7M4 11h4" stroke="#8aa2cc" />
      <path d="m9 13 5-5" stroke="#e2a93a" strokeWidth="3" />
      <path d="m14 8 4-4" stroke="#3d6cc4" strokeWidth="3" />
    </>
  ),
  newmaster: (
    <>
      {cards}
      {star}
    </>
  ),
  newtitle: (
    <>
      <rect x="8.500" y="3.500" width="8" height="5" fill="#f3f6fb" stroke="#65779a" />
      <rect x="7.500" y="11.500" width="11" height="7" fill="#f3f6fb" stroke="#65779a" />
      <path d="M9.500 15h7M5.500 9v6H8" stroke="#4c6db0" />
      {star}
    </>
  ),
  delmaster: (
    <>
      {cards}
      <path d="m8 9 9 9M17 9l-9 9" stroke="#e04a26" strokeWidth="2.500" />
    </>
  ),
  preserve: (
    <>
      {cards}
      <path d="M8 13c2-3 4-2 5 0l5-4v6l-5 1c-2 2-5 0-5-3z" fill="#3f6fc6" stroke="#274a90" />
    </>
  ),
  rename: (
    <>
      {cards}
      <TextGlyph x={14} y={19} size={15} color="#3f62ad">
        A
      </TextGlyph>
    </>
  ),
  layout: (
    <>
      <rect x="1.500" y="3.500" width="17" height="14" fill="#eef2f9" stroke="#75849e" />
      <path d="M4 6h12M11 9.500h6M11 12h6M11 14.500h6" stroke="#8b9dc0" strokeWidth="1.500" />
      <rect x="4" y="9" width="5" height="6" fill="#a9bbdc" stroke="none" />
    </>
  ),
  pointer: <path d="M6 2v14l3.500-3 2.500 5 2.500-1.500L12 12h5z" fill="#fff" stroke="#667" />,
  line: <path d="m4 4 13 13" strokeWidth="1.500" />,
  arrow: (
    <>
      <path d="m4 4 9 9" strokeWidth="1.500" />
      <path d="m17 17-8-3 5-5z" fill="#222" stroke="none" />
    </>
  ),
  rect: <path d="M1 4h18v12H1z" strokeWidth="1.500" />,
  oval: <ellipse cx="10" cy="10" rx="9" ry="6.500" stroke="#456" strokeWidth="1.500" />,
  hbox: (
    <>
      <rect x="1.500" y="3.500" width="17" height="13" fill="#f4f8ff" stroke="#7b8bab" />
      <TextGlyph x={6} y={11} size={9} color="#345">
        A
      </TextGlyph>
      <path d="M11 7.500h6M11 10h6M4 13.500h13" stroke="#7b8bab" />
    </>
  ),
  vbox: (
    <>
      <rect x="1.500" y="3.500" width="17" height="13" fill="#f4f8ff" stroke="#7b8bab" />
      <path d="M4.500 6v9M7 6v9M9.500 6v9M14 12v3" stroke="#7b8bab" />
      <TextGlyph x={14} y={11} size={9} color="#345">
        A
      </TextGlyph>
    </>
  ),
  wordart: (
    <TextGlyph x={9} y={17} size={21} color="#3670d0" fontStyle="italic">
      A
    </TextGlyph>
  ),
  diagram: (
    <>
      <circle cx="10" cy="10" r="6.500" stroke="#667" strokeWidth="1.500" strokeDasharray="3 3" />
      <g stroke="#556">
        <circle cx="4" cy="8" r="2" fill="#f4cf3c" />
        <circle cx="16" cy="8" r="2" fill="#e8502c" />
        <circle cx="10" cy="16.500" r="2" fill="#7a6cd8" />
      </g>
    </>
  ),
  clipart: (
    <>
      <rect x="2.500" y="2.500" width="15" height="16" fill="#e2e8f4" stroke="#5b6880" />
      <path d="M5 17c0-5 10-5 10 0z" fill="#4a3020" stroke="none" />
      <circle cx="10" cy="8.500" r="4.500" fill="#c8772c" stroke="#5b3414" />
      <circle cx="10" cy="9" r="2.500" fill="#fbd9a4" stroke="none" />
    </>
  ),
  picture: (
    <>
      <rect x="2.500" y="2.500" width="16" height="16" fill="#dfeafb" stroke="#6b7da0" />
      <path d="m3 16 6-7 4 4 2-2 3 4v3H3z" fill="#5a6fa8" stroke="none" />
      <circle cx="13" cy="6.500" r="2" fill="#e8602c" stroke="none" />
    </>
  ),
  fill: (
    <>
      <path d="m4 8 6-5 7 6-6 6z" fill="#f0f5fd" stroke="#5b6c8c" />
      <path d="M10 8V2H7v4" stroke="#5b6c8c" />
      <path d="M16 7c3 2 3 4 2 8-1-3-2-4-3-5z" fill="#3f72d0" stroke="none" />
      <rect x="1" y="15" width="18" height="4" fill="#b9e1e3" stroke="none" />
    </>
  ),
  brush: (
    <>
      <path d="m11 9 6-7" stroke="#e8b63a" strokeWidth="3.500" />
      <path d="M3 12c3 0 3-4 7-4l2 3c-2 3-6 3-9 1z" fill="#3f72d0" stroke="#274a90" />
      <rect x="1" y="14" width="18" height="5" fill="#000" stroke="none" />
    </>
  ),
  weight: (
    <g fill="#000" stroke="none">
      <rect x="1" y="4" width="18" height="2" />
      <rect x="1" y="9" width="18" height="3" />
      <rect x="1" y="14" width="18" height="4" />
    </g>
  ),
  dash: (
    <>
      <path d="M1 4.500h18" />
      <path d="M1 8.500h18M1 12.500h18M1 16.500h18" strokeDasharray="2 1" />
    </>
  ),
  arrows: (
    <>
      <path d="M1 5h14M4 10.500h15M4 16h12" strokeWidth="1.500" />
      <path d="m14 2 5 3-5 3zM6 7.500l-5 3 5 3zM14 13l5 3-5 3zM6 13l-5 3 5 3z" fill="#222" stroke="none" />
    </>
  ),
  shadow: (
    <>
      <rect x="6" y="6" width="13" height="13" fill="#8297b5" stroke="none" />
      <rect x="3" y="3" width="13" height="13" fill="#4d9a52" stroke="#2f6a34" />
    </>
  ),
  cube: (
    <g stroke="#2f6a34">
      <path d="m3 7 4-4h12l-4 4z" fill="#b4e0a8" />
      <path d="m15 7 4-4v11l-4 4z" fill="#3d7d42" />
      <path d="M3 7h12v11H3z" fill="#69b566" />
    </g>
  ),
};
